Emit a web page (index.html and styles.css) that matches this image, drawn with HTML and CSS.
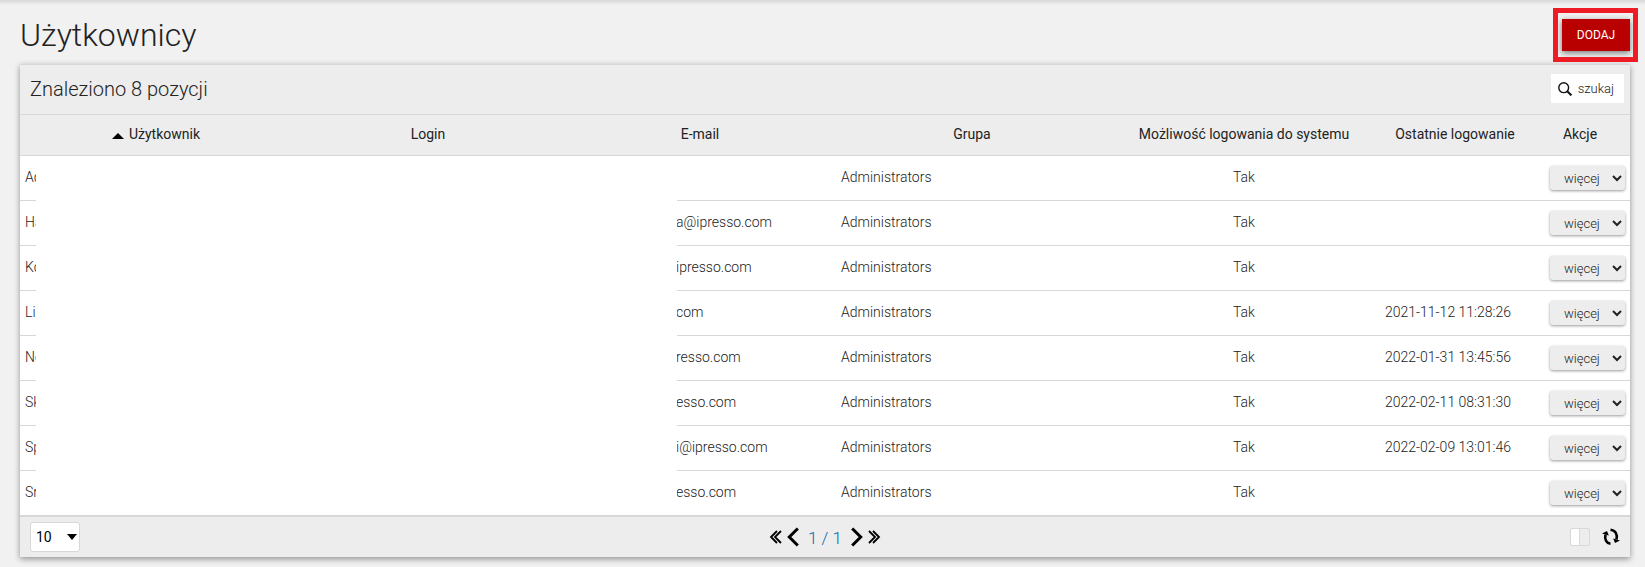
FILE: index.html
```html
<!DOCTYPE html>
<html lang="pl">
<head>
    <meta charset="UTF-8">
    <title>Użytkownicy</title>
    <link rel="stylesheet" href="styles.css">
</head>
<body>
<div class="page-head">
    <h1>Użytkownicy</h1>
    <div class="add-box">
        <button type="button" class="btn-add">DODAJ</button>
    </div>
</div>

<div class="panel">
    <div class="panel-title">
        <h2>Znaleziono 8 pozycji</h2>
        <button type="button" class="btn-search">
            <svg width="14" height="14" viewBox="0 0 14 14" fill="none" stroke="#111">
                <circle cx="5.7" cy="5.7" r="4.9" stroke-width="1.4"/>
                <path d="M9.2 9.2L13.4 13.4" stroke-width="2"/>
            </svg>
            szukaj
        </button>
    </div>

    <div class="table-wrap">
        <table class="users">
            <thead>
            <tr>
                <th><span class="sort-up"></span>Użytkownik</th>
                <th>Login</th>
                <th>E-mail</th>
                <th>Grupa</th>
                <th>Możliwość logowania do systemu</th>
                <th class="col-date">Ostatnie logowanie</th>
                <th class="col-actions">Akcje</th>
            </tr>
            </thead>
            <tbody>
            <tr>
                <td>Ad</td><td></td><td class="email"></td><td>Administrators</td><td class="center">Tak</td><td></td>
                <td class="actions"><select aria-label="Akcje"><option>więcej</option></select></td>
            </tr>
            <tr>
                <td>Ha</td><td></td><td class="email">a@ipresso.com</td><td>Administrators</td><td class="center">Tak</td><td></td>
                <td class="actions"><select aria-label="Akcje"><option>więcej</option></select></td>
            </tr>
            <tr>
                <td>Ko</td><td></td><td class="email">ipresso.com</td><td>Administrators</td><td class="center">Tak</td><td></td>
                <td class="actions"><select aria-label="Akcje"><option>więcej</option></select></td>
            </tr>
            <tr>
                <td>Li</td><td></td><td class="email">com</td><td>Administrators</td><td class="center">Tak</td><td>2021-11-12 11:28:26</td>
                <td class="actions"><select aria-label="Akcje"><option>więcej</option></select></td>
            </tr>
            <tr>
                <td>No</td><td></td><td class="email">resso.com</td><td>Administrators</td><td class="center">Tak</td><td>2022-01-31 13:45:56</td>
                <td class="actions"><select aria-label="Akcje"><option>więcej</option></select></td>
            </tr>
            <tr>
                <td>Sk</td><td></td><td class="email">esso.com</td><td>Administrators</td><td class="center">Tak</td><td>2022-02-11 08:31:30</td>
                <td class="actions"><select aria-label="Akcje"><option>więcej</option></select></td>
            </tr>
            <tr>
                <td>Sp</td><td></td><td class="email">i@ipresso.com</td><td>Administrators</td><td class="center">Tak</td><td>2022-02-09 13:01:46</td>
                <td class="actions"><select aria-label="Akcje"><option>więcej</option></select></td>
            </tr>
            <tr>
                <td>Sr</td><td></td><td class="email">esso.com</td><td>Administrators</td><td class="center">Tak</td><td></td>
                <td class="actions"><select aria-label="Akcje"><option>więcej</option></select></td>
            </tr>
            </tbody>
        </table>
        <div class="cover"></div>
    </div>

    <div class="panel-foot">
        <div class="page-size">
            <select aria-label="Liczba pozycji"><option>10</option></select>
        </div>
        <div class="pager">
            <button type="button" aria-label="Pierwsza">
                <svg width="13" height="14" viewBox="0 0 13 14" fill="none" stroke="#000" stroke-width="1.8">
                    <path d="M8 1L2 7L8 13M12 1L6 7L12 13"/>
                </svg>
            </button>
            <button type="button" aria-label="Poprzednia">
                <svg width="12" height="20" viewBox="0 0 12 20" fill="none" stroke="#000" stroke-width="3">
                    <path d="M10.800 1.500L2.300 10L10.800 18.500"/>
                </svg>
            </button>
            <a href="#">1 / 1</a>
            <button type="button" aria-label="Następna">
                <svg width="12" height="20" viewBox="0 0 12 20" fill="none" stroke="#000" stroke-width="3">
                    <path d="M1.200 1.500L9.700 10L1.200 18.500"/>
                </svg>
            </button>
            <button type="button" aria-label="Ostatnia">
                <svg width="13" height="14" viewBox="0 0 13 14" fill="none" stroke="#000" stroke-width="1.8">
                    <path d="M1 1L7 7L1 13M5 1L11 7L5 13"/>
                </svg>
            </button>
        </div>
        <div class="tools">
            <button type="button" class="toggle" aria-label="Widok"></button>
            <button type="button" aria-label="Odśwież">
                <svg width="18" height="18" viewBox="0 0 18 18">
                    <path d="M8.500 15.800C4.500 15.300 2.300 11.500 3.500 6.500" fill="none" stroke="#000" stroke-width="2.600"/>
                    <path d="M0 5.500L5 3L6.800 7.500Z"/>
                    <path d="M8.500 1.700C13.500 2.200 15.700 6.500 14.500 11.500" fill="none" stroke="#000" stroke-width="2.600"/>
                    <path d="M18 12.500L13 15L11.200 10.500Z"/>
                </svg>
            </button>
        </div>
    </div>
</div>
</body>
</html>
```
FILE: styles.css
```css
* {
    margin: 0;
    padding: 0;
    box-sizing: border-box;
}

body {
    background: #f1f1f1 linear-gradient(to bottom, #d8d8d8, #f1f1f1 5px) no-repeat;
    color: #222;
    font-family: Roboto, "Noto Sans", sans-serif;
    font-size: 14px;
    font-weight: 300;
    padding: 0 15px 10px 20px;
}

button, select {
    font-family: inherit;
    font-weight: inherit;
    color: inherit;
    border: 0;
    background: none;
}

.page-head {
    display: flex;
    justify-content: space-between;
    align-items: center;
    height: 64px;
    padding-top: 5px;
}

h1 {
    font-size: 32px;
    font-weight: 300;
}

.add-box {
    position: relative;
}

/* ramka wokół przycisku */
.add-box::after {
    content: "";
    position: absolute;
    top: -11px;
    left: -9px;
    right: -8px;
    bottom: -11px;
    border: 5px solid #ed1c24;
    pointer-events: none;
}

.btn-add {
    display: block;
    width: 68px;
    height: 32px;
    padding-top: 1px;
    background-color: #b80000;
    color: #fff;
    font-size: 12px;
    font-weight: 400;
    box-shadow: 0 2px 6px rgba(0, 0, 0, 0.5);
}

.panel {
    background-color: #ededed;
    border-top: 1px solid #d8d8d8;
    box-shadow: 0 2px 6px rgba(0, 0, 0, 0.4);
}

.panel-title {
    display: flex;
    justify-content: space-between;
    align-items: center;
    height: 50px;
    padding: 0 6px 2px 10px;
    border-bottom: 1px solid #d8d8d8;
}

h2 {
    font-size: 20px;
    font-weight: 300;
}

.btn-search {
    display: flex;
    align-items: center;
    gap: 6px;
    height: 29px;
    padding: 0 10px 0 7px;
    background-color: #fff;
    font-size: 13px;
}

.table-wrap {
    position: relative;
}

.users {
    width: 100%;
    table-layout: fixed;
    border-collapse: separate;
    border-spacing: 0;
}

.users th {
    height: 41px;
    padding-bottom: 3px;
    border-bottom: 1px solid #d8d8d8;
    font-weight: 400;
    text-align: center;
}

.users td {
    height: 45px;
    padding: 0 5px 3px;
    background-color: #fff;
    border-bottom: 1px solid #d8d8d8;
}

.users .col-date {
    width: 150px;
}

.users .col-actions {
    width: 100px;
}

.users .email {
    padding-left: 112px;
}

.users .center {
    text-align: center;
}

.users .actions {
    padding-bottom: 0;
    text-align: right;
}

.actions select {
    width: 75px;
    height: 24px;
    padding-left: 10px;
    background-color: #ededed;
    border-radius: 3px;
    box-shadow: 0 1px 3px rgba(0, 0, 0, 0.4);
    font-size: 13px;
    vertical-align: middle;
}

.sort-up {
    display: inline-block;
    margin-right: 5px;
    border: 6px solid transparent;
    border-top: 0;
    border-bottom-color: #000;
}

/* zasłania dane osobowe */
.cover {
    position: absolute;
    top: 41px;
    bottom: 1px;
    left: 16px;
    width: calc((100% - 250px) * 0.4 + 97px);
    background-color: #fff;
}

.panel-foot {
    display: grid;
    grid-template-columns: 1fr auto 1fr;
    align-items: center;
    height: 41px;
    padding: 0 10px;
    border-top: 1px solid #d8d8d8;
}

.page-size {
    position: relative;
    justify-self: start;
}

.page-size select {
    display: block;
    appearance: none;
    width: 50px;
    height: 30px;
    padding-left: 5px;
    background-color: #fff;
    border: 1px solid #d8d8d8;
    border-radius: 3px;
    color: #000;
    font-size: 14px;
    font-weight: 400;
}

.page-size::after {
    content: "";
    position: absolute;
    top: 12px;
    right: 3px;
    border: 5px solid transparent;
    border-top: 6px solid #000;
    border-bottom: 0;
    pointer-events: none;
}

.pager {
    display: flex;
    align-items: center;
    gap: 5px;
}

.pager svg, .tools svg {
    display: block;
}

.pager a {
    padding: 2px 4px 0;
    color: #0d6aa8;
    font-size: 17px;
    text-decoration: none;
}

.tools {
    display: flex;
    justify-self: end;
    align-items: center;
    gap: 12px;
}

.toggle {
    width: 20px;
    height: 18px;
    border: 1px solid #d8d8d8;
    border-radius: 2px;
    background: linear-gradient(to right, #fff 8px, #d8d8d8 8px, #d8d8d8 9px, #ededed 9px);
}
```
